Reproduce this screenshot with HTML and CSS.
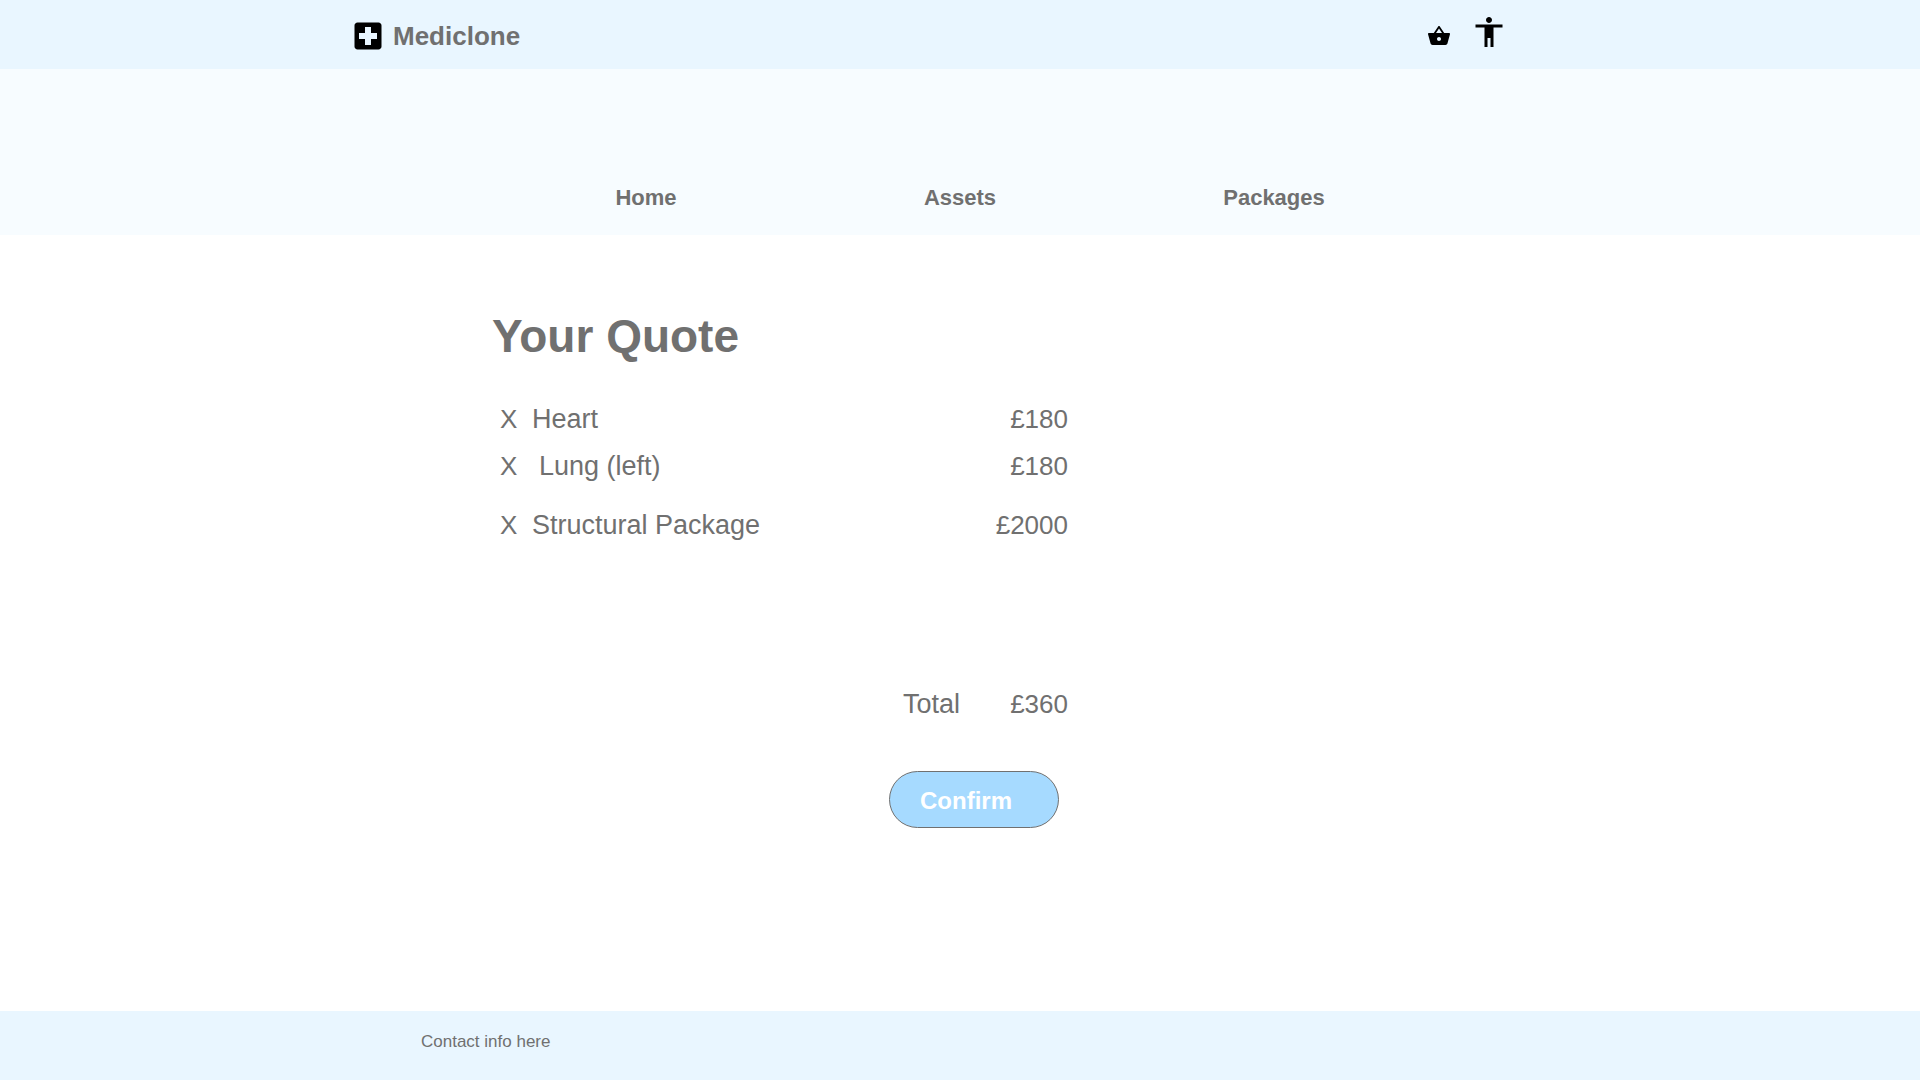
FILE: index.html
```html
<!DOCTYPE html>
<html lang="en">
<head>
  <meta charset="utf-8">
  <meta name="viewport" content="width=device-width, initial-scale=1">
  <title>Mediclone – Your Quote</title>
  <link rel="stylesheet" href="styles.css">
</head>
<body>
  <header class="topbar">
    <div class="topbar-inner">
      <a class="brand" href="#">
        <svg class="icon-large" viewBox="0 0 24 24" aria-hidden="true"><path d="M19 3H5c-1.1 0-2 .9-2 2v14c0 1.1.9 2 2 2h14c1.1 0 2-.9 2-2V5c0-1.1-.9-2-2-2zm-1 11h-4v4h-4v-4H6v-4h4V6h4v4h4v4z"/></svg>
        <span>Mediclone</span>
      </a>
      <div class="tools">
        <a class="tool" href="#" aria-label="Basket">
          <svg class="icon-small" viewBox="0 0 24 24" aria-hidden="true"><path d="M17.21 9l-4.38-6.56c-.19-.28-.51-.42-.83-.42-.32 0-.64.14-.83.43L6.79 9H2c-.55 0-1 .45-1 1 0 .09.01.18.04.27l2.54 9.27c.23.84 1 1.46 1.92 1.46h13c.92 0 1.69-.62 1.93-1.46l2.54-9.27L23 10c0-.55-.45-1-1-1h-4.79zM9 9l3-4.4L15 9H9zm3 8c-1.1 0-2-.9-2-2s.9-2 2-2 2 .9 2 2-.9 2-2 2z"/></svg>
        </a>
        <a class="tool" href="#" aria-label="Accessibility">
          <svg class="icon-large" viewBox="0 0 24 24" aria-hidden="true"><path d="M12 2c1.1 0 2 .9 2 2s-.9 2-2 2-2-.9-2-2 .9-2 2-2zm9 7h-6v13h-2v-6h-2v6H9V9H3V7h18v2z"/></svg>
        </a>
      </div>
    </div>
  </header>

  <nav class="mainnav" aria-label="Main">
    <ul class="mainnav-list">
      <li><a href="#">Home</a></li>
      <li><a href="#">Assets</a></li>
      <li><a href="#">Packages</a></li>
    </ul>
  </nav>

  <main class="page">
    <section class="quote">
      <h1 class="quote-title">Your Quote</h1>
      <table class="quote-table">
        <tbody>
          <tr>
            <td class="remove-cell"><button class="remove" type="button" aria-label="Remove Heart">X</button></td>
            <td class="item">Heart</td>
            <td class="price">£180</td>
          </tr>
          <tr>
            <td class="remove-cell"><button class="remove" type="button" aria-label="Remove Lung (left)">X</button></td>
            <td class="item item-indented">Lung (left)</td>
            <td class="price">£180</td>
          </tr>
          <tr class="package-row">
            <td class="remove-cell"><button class="remove" type="button" aria-label="Remove Structural Package">X</button></td>
            <td class="item">Structural Package</td>
            <td class="price">£2000</td>
          </tr>
        </tbody>
        <tfoot>
          <tr class="total-row">
            <th class="total-label" colspan="2" scope="row">Total</th>
            <td class="price">£360</td>
          </tr>
        </tfoot>
      </table>
      <div class="actions">
        <button class="confirm" type="button">Confirm</button>
      </div>
    </section>
  </main>

  <footer class="footer">
    <p class="contact">Contact info here</p>
  </footer>
</body>
</html>
```
FILE: styles.css
```css
* {
  box-sizing: border-box;
}

body {
  display: flex;
  flex-direction: column;
  min-height: 100vh;
  margin: 0;
  background: #fff;
  color: #707070;
  font-family: "Liberation Sans", Arial, sans-serif;
}

a {
  color: inherit;
  text-decoration: none;
}

/* Top bar */
.topbar {
  display: grid;
  grid-template-columns: 350fr 1157fr 413fr;
  min-height: 69px;
  padding-top: 14px;
  background: #e9f6ff;
}

.topbar-inner {
  display: flex;
  grid-column: 2;
  justify-content: space-between;
  align-items: flex-start;
}

.brand {
  display: flex;
  align-items: center;
  gap: 7px;
  padding-top: 4px;
  font-size: 26px;
  font-weight: bold;
  line-height: 36px;
}

.tools {
  display: flex;
  align-items: flex-end;
  gap: 20px;
}

.tool {
  display: block;
}

.tool:first-child {
  padding-bottom: 2px;
}

.icon-large,
.icon-small {
  display: block;
  fill: #000;
}

.icon-large {
  width: 36px;
  height: 36px;
}

.icon-small {
  width: 24px;
  height: 24px;
}

/* Main navigation */
.mainnav {
  padding: 119px 24px 27px;
  background: #f7fcff;
}

.mainnav-list {
  display: grid;
  grid-template-columns: repeat(3, 1fr);
  max-width: 942px;
  margin: 0 auto;
  padding: 0;
  list-style: none;
  font-size: 22px;
  font-weight: bold;
  line-height: 20px;
  text-align: center;
}

/* Quote */
.page {
  display: grid;
  grid-template-columns: 492fr 576fr 852fr;
  flex: 1;
  padding: 73px 0 48px;
}

.quote {
  grid-column: 2;
}

.quote-title {
  margin: 0;
  font-size: 46px;
  line-height: 56px;
  white-space: nowrap;
}

.quote-table {
  width: 100%;
  margin-top: 32px;
  border-collapse: collapse;
  font-size: 26px;
  line-height: 47px;
}

.quote-table td,
.quote-table th {
  padding: 0;
  vertical-align: bottom;
}

.remove-cell {
  width: 40px;
}

.remove {
  display: block;
  margin-left: 8px;
  padding: 0;
  border: 0;
  background: none;
  color: inherit;
  font: inherit;
  cursor: pointer;
}

.item {
  font-size: 27px;
}

.quote-table .item-indented {
  padding-left: 7px;
}

.price {
  width: 108px;
  text-align: right;
}

.package-row {
  height: 59px;
}

.total-row {
  height: 179px;
}

.total-label {
  font-size: 27px;
  font-weight: normal;
  text-align: right;
}

.actions {
  display: flex;
  justify-content: flex-end;
  margin-top: 43px;
  padding-right: 9px;
}

.confirm {
  width: 170px;
  height: 57px;
  padding: 2px 0 0 30px;
  border: 1px solid #707070;
  border-radius: 29px;
  background: #a6daff;
  color: #fff;
  font-family: inherit;
  font-size: 24px;
  font-weight: bold;
  text-align: left;
  cursor: pointer;
}

/* Footer */
.footer {
  display: grid;
  grid-template-columns: 421fr 1499fr;
  min-height: 69px;
  padding: 21px 0;
  background: #e9f6ff;
}

.contact {
  grid-column: 2;
  margin: 0;
  font-size: 17px;
  line-height: 20px;
}
```
